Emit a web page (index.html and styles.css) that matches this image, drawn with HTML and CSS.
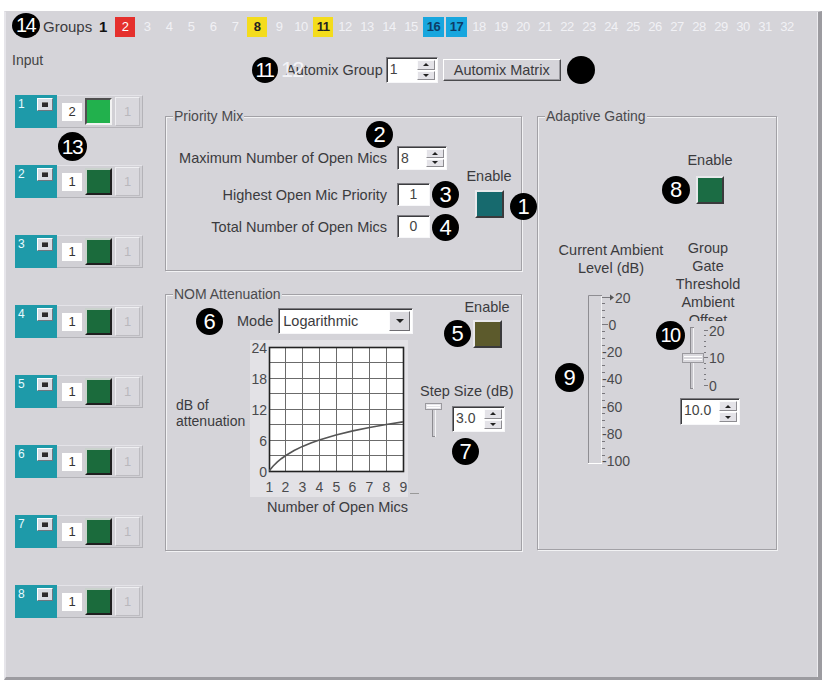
FILE: index.html
```html
<!DOCTYPE html>
<html>
<head>
<meta charset="utf-8">
<title>Automix</title>
<link rel="stylesheet" href="styles.css">
</head>
<body>
<div class="window">
  <div class="topbar">
    <span class="badge badge-2d badge-14">14</span>
    <span class="groups-label">Groups</span>
    <div class="group-nums">
      <span class="gn gn-cur">1</span><span class="gn gn-red">2</span><span class="gn">3</span><span class="gn">4</span><span class="gn">5</span><span class="gn">6</span><span class="gn">7</span><span class="gn gn-yel">8</span><span class="gn">9</span><span class="gn">10</span><span class="gn gn-yel">11</span><span class="gn">12</span><span class="gn">13</span><span class="gn">14</span><span class="gn">15</span><span class="gn gn-blu">16</span><span class="gn gn-blu">17</span><span class="gn">18</span><span class="gn">19</span><span class="gn">20</span><span class="gn">21</span><span class="gn">22</span><span class="gn">23</span><span class="gn">24</span><span class="gn">25</span><span class="gn">26</span><span class="gn">27</span><span class="gn">28</span><span class="gn">29</span><span class="gn">30</span><span class="gn">31</span><span class="gn">32</span>
    </div>
  </div>

  <div class="main">
    <div class="left-col">
      <div class="input-label">Input</div>
      <div class="strips">
        <div class="strip"><div class="strip-ch"><span class="ch-num">1</span><span class="ch-btn"><span></span></span></div><span class="strip-val">2</span><span class="strip-led led-on"></span><span class="strip-dis">1</span></div>
        <div class="strip"><div class="strip-ch"><span class="ch-num">2</span><span class="ch-btn"><span></span></span></div><span class="strip-val">1</span><span class="strip-led"></span><span class="strip-dis">1</span></div>
        <div class="strip"><div class="strip-ch"><span class="ch-num">3</span><span class="ch-btn"><span></span></span></div><span class="strip-val">1</span><span class="strip-led"></span><span class="strip-dis">1</span></div>
        <div class="strip"><div class="strip-ch"><span class="ch-num">4</span><span class="ch-btn"><span></span></span></div><span class="strip-val">1</span><span class="strip-led"></span><span class="strip-dis">1</span></div>
        <div class="strip"><div class="strip-ch"><span class="ch-num">5</span><span class="ch-btn"><span></span></span></div><span class="strip-val">1</span><span class="strip-led"></span><span class="strip-dis">1</span></div>
        <div class="strip"><div class="strip-ch"><span class="ch-num">6</span><span class="ch-btn"><span></span></span></div><span class="strip-val">1</span><span class="strip-led"></span><span class="strip-dis">1</span></div>
        <div class="strip"><div class="strip-ch"><span class="ch-num">7</span><span class="ch-btn"><span></span></span></div><span class="strip-val">1</span><span class="strip-led"></span><span class="strip-dis">1</span></div>
        <div class="strip"><div class="strip-ch"><span class="ch-num">8</span><span class="ch-btn"><span></span></span></div><span class="strip-val">1</span><span class="strip-led"></span><span class="strip-dis">1</span></div>
      </div>
      <span class="badge badge-2d badge-over b-13">13</span>
    </div>

    <div class="right-col">
      <div class="automix-row">
        <span class="badge badge-2d badge-11">11</span>
        <span class="ghost-12">12</span>
        <span class="am-label">Automix Group</span>
        <div class="spin spin-am"><span class="spin-val">1</span><span class="spin-btns"><span class="sb"><i class="tri-up"></i></span><span class="sb"><i class="tri-down"></i></span></span></div>
        <button class="btn">Automix Matrix</button>
        <span class="badge badge-dot"></span>
      </div>

      <div class="panels">
        <div class="col1">
          <div class="groupbox pm">
            <div class="gb-title">Priority Mix</div>
            <div class="pm-body">
              <div class="pm-fields">
                <div class="pm-row r1"><span class="pm-label">Maximum Number of Open Mics</span><div class="spin spin-pm"><span class="spin-val">8</span><span class="spin-btns"><span class="sb"><i class="tri-up"></i></span><span class="sb"><i class="tri-down"></i></span></span></div></div>
                <div class="pm-row r2"><span class="pm-label">Highest Open Mic Priority</span><div class="field">1</div></div>
                <div class="pm-row r3"><span class="pm-label">Total Number of Open Mics</span><div class="field">0</div></div>
              </div>
              <div class="enable-col pm-enable">
                <div class="enable-text">Enable</div>
                <div class="toggle tg-teal"></div>
              </div>
            </div>
            <span class="badge badge-over b-pm2">2</span>
            <span class="badge badge-over b-pm3">3</span>
            <span class="badge badge-over b-pm4">4</span>
            <span class="badge badge-over b-pm1">1</span>
          </div>

          <div class="groupbox nom">
            <div class="gb-title">NOM Attenuation</div>
            <div class="nom-body">
              <div class="nom-left">
                <div class="mode-row">
                  <span class="mode-label">Mode</span>
                  <div class="select"><span class="select-text">Logarithmic</span><span class="select-btn"><i class="tri-down big"></i></span></div>
                </div>
                <div class="chart-row">
                  <div class="db-label">dB of<br>attenuation</div>
                  <div class="chart-col">
                    <svg class="chart" width="170" height="157" viewBox="0 0 170 157">
                      <rect x="0" y="0" width="158" height="157" fill="#e3e2e6"/>
                      <rect x="19.5" y="7.5" width="134" height="124" fill="#ffffff"/>
                      <g stroke="#6b6b6b" stroke-width="1">
                        <line x1="35.5" y1="7.5" x2="35.5" y2="131.5"/>
                        <line x1="52.5" y1="7.5" x2="52.5" y2="131.5"/>
                        <line x1="69.5" y1="7.5" x2="69.5" y2="131.5"/>
                        <line x1="86.5" y1="7.5" x2="86.5" y2="131.5"/>
                        <line x1="102.5" y1="7.5" x2="102.5" y2="131.5"/>
                        <line x1="119.5" y1="7.5" x2="119.5" y2="131.5"/>
                        <line x1="136.5" y1="7.5" x2="136.5" y2="131.5"/>
                        <line x1="19.5" y1="22.5" x2="153.5" y2="22.5"/>
                        <line x1="19.5" y1="38.5" x2="153.5" y2="38.5"/>
                        <line x1="19.5" y1="53.5" x2="153.5" y2="53.5"/>
                        <line x1="19.5" y1="69.5" x2="153.5" y2="69.5"/>
                        <line x1="19.5" y1="84.5" x2="153.5" y2="84.5"/>
                        <line x1="19.5" y1="100.5" x2="153.5" y2="100.5"/>
                        <line x1="19.5" y1="115.5" x2="153.5" y2="115.5"/>
                      </g>
                      <rect x="19.5" y="7.5" width="134" height="124" fill="none" stroke="#222" stroke-width="1.6"/>
                      <polyline fill="none" stroke="#555" stroke-width="1.6" points="19.5,131 20.7,128.9 23.2,126 27.4,121.9 31.6,118.5 35.8,115.5 44.1,110.5 52.5,106.4 60.9,103 69.3,100 77.6,97.4 86,95 102.8,90.9 119.5,87.5 136.3,84.5 153,81.9"/>
                      <line x1="160" y1="153.5" x2="169" y2="153.5" stroke="#999" stroke-width="1"/>
                      <g class="axis-text" text-anchor="end">
                        <text x="17" y="13">24</text>
                        <text x="17" y="44">18</text>
                        <text x="17" y="75">12</text>
                        <text x="17" y="106">6</text>
                        <text x="17" y="137">0</text>
                      </g>
                      <g class="axis-text" text-anchor="middle">
                        <text x="19.5" y="152">1</text>
                        <text x="35.5" y="152">2</text>
                        <text x="52.5" y="152">3</text>
                        <text x="69.5" y="152">4</text>
                        <text x="86.5" y="152">5</text>
                        <text x="102.5" y="152">6</text>
                        <text x="119.5" y="152">7</text>
                        <text x="136.5" y="152">8</text>
                        <text x="153.5" y="152">9</text>
                      </g>
                    </svg>
                    <div class="x-label">Number of Open Mics</div>
                  </div>
                </div>
              </div>
              <div class="nom-right">
                <div class="enable-col nom-enable">
                  <div class="enable-text">Enable</div>
                  <div class="toggle tg-olive"></div>
                </div>
                <div class="step-label">Step Size (dB)</div>
                <div class="step-row">
                  <svg class="step-slider" width="18" height="36" viewBox="0 0 18 36">
                    <rect x="7.5" y="7.5" width="3" height="27" fill="#cfced3" stroke="#8c8b90" stroke-width="1"/>
                    <line x1="10.5" y1="8" x2="10.5" y2="35" stroke="#f4f4f6"/>
                    <rect x="0.5" y="1.5" width="16" height="6" fill="#e6e5ea" stroke="#9a999e"/>
                    <line x1="2" y1="3.5" x2="15" y2="3.5" stroke="#ffffff"/>
                    <line x1="2" y1="5.5" x2="15" y2="5.5" stroke="#ffffff"/>
                  </svg>
                  <div class="spin spin-step"><span class="spin-val">3.0</span><span class="spin-btns"><span class="sb"><i class="tri-up"></i></span><span class="sb"><i class="tri-down"></i></span></span></div>
                </div>
              </div>
            </div>
            <span class="badge badge-over b-nom6">6</span>
            <span class="badge badge-over b-nom5">5</span>
            <span class="badge badge-over b-nom7">7</span>
          </div>
        </div>

        <div class="groupbox ag">
          <div class="gb-title">Adaptive Gating</div>
          <div class="enable-col ag-enable">
            <div class="enable-text">Enable</div>
            <div class="toggle tg-green"></div>
          </div>
          <div class="ag-cols">
            <div class="ag-col-a">
              <div class="ag-text">Current Ambient<br>Level (dB)</div>
              <svg class="meter" width="66" height="180" viewBox="0 0 66 180">
                <path d="M8.5 173V5.5H22" fill="none" stroke="#8e8d92" stroke-width="1"/>
                <line x1="8" y1="173.5" x2="22" y2="173.5" stroke="#ffffff"/>
                <line x1="21.5" y1="6" x2="21.5" y2="173" stroke="#f0f0f2"/>
                <g stroke="#7a797e" stroke-width="1">
                  <line x1="22" y1="13.5" x2="25" y2="13.5"/><line x1="22" y1="20.5" x2="25" y2="20.5"/><line x1="22" y1="27.5" x2="25" y2="27.5"/>
                  <line x1="22" y1="41.5" x2="25" y2="41.5"/><line x1="22" y1="48.5" x2="25" y2="48.5"/><line x1="22" y1="55.5" x2="25" y2="55.5"/>
                  <line x1="22" y1="68.5" x2="25" y2="68.5"/><line x1="22" y1="75.5" x2="25" y2="75.5"/><line x1="22" y1="82.5" x2="25" y2="82.5"/>
                  <line x1="22" y1="96.5" x2="25" y2="96.5"/><line x1="22" y1="103.5" x2="25" y2="103.5"/><line x1="22" y1="110.5" x2="25" y2="110.5"/>
                  <line x1="22" y1="123.5" x2="25" y2="123.5"/><line x1="22" y1="130.5" x2="25" y2="130.5"/><line x1="22" y1="137.5" x2="25" y2="137.5"/>
                  <line x1="22" y1="151.5" x2="25" y2="151.5"/><line x1="22" y1="158.5" x2="25" y2="158.5"/><line x1="22" y1="165.5" x2="25" y2="165.5"/>
                  <line x1="22" y1="7.5" x2="30" y2="7.5"/>
                  <line x1="22" y1="34.5" x2="28" y2="34.5"/>
                </g>
                <polygon points="30,4.5 34,7.5 30,10.5" fill="#555"/>
                <g class="axis-text">
                  <text x="35" y="13">20</text>
                  <text x="28.5" y="40">0</text>
                  <text x="22" y="67">-20</text>
                  <text x="22" y="94">-40</text>
                  <text x="22" y="122">-60</text>
                  <text x="22" y="149">-80</text>
                  <text x="22" y="176">-100</text>
                </g>
              </svg>
            </div>
            <div class="ag-col-b">
              <div class="ag-text">Group<br>Gate<br>Threshold<br>Ambient<br>Offset</div>
              <svg class="ag-slider" width="50" height="72" viewBox="0 0 50 72">
                <rect x="10.5" y="6.5" width="3" height="61" fill="#c9c8cd" stroke="#8c8b90"/>
                <line x1="13.5" y1="7" x2="13.5" y2="68" stroke="#f4f4f6"/>
                <rect x="2.5" y="32.5" width="21" height="9" fill="#d9d8dd" stroke="#9a999e"/>
                <line x1="4" y1="35.5" x2="22" y2="35.5" stroke="#ffffff"/>
                <line x1="4" y1="38.5" x2="22" y2="38.5" stroke="#ffffff"/>
                <g stroke="#7a797e">
                  <line x1="24" y1="9.5" x2="28" y2="9.5"/>
                  <line x1="24" y1="14.5" x2="26" y2="14.5"/><line x1="24" y1="20.5" x2="26" y2="20.5"/><line x1="24" y1="25.5" x2="26" y2="25.5"/><line x1="24" y1="31.5" x2="26" y2="31.5"/>
                  <line x1="24" y1="36.5" x2="28" y2="36.5"/>
                  <line x1="24" y1="42.5" x2="26" y2="42.5"/><line x1="24" y1="47.5" x2="26" y2="47.5"/><line x1="24" y1="53.5" x2="26" y2="53.5"/><line x1="24" y1="58.5" x2="26" y2="58.5"/>
                  <line x1="24" y1="64.5" x2="28" y2="64.5"/>
                </g>
                <g class="axis-text">
                  <text x="29" y="14.5">20</text>
                  <text x="29" y="41.5">10</text>
                  <text x="29" y="69.5">0</text>
                </g>
              </svg>
              <div class="spin spin-ag"><span class="spin-val">10.0</span><span class="spin-btns"><span class="sb"><i class="tri-up"></i></span><span class="sb"><i class="tri-down"></i></span></span></div>
            </div>
          </div>
          <span class="badge badge-over b-ag8">8</span>
          <span class="badge badge-over b-ag9">9</span>
          <span class="badge badge-2d badge-over b-ag10">10</span>
        </div>
      </div>
    </div>
  </div>
</div>
</body>
</html>
```

FILE: styles.css
```css
* { box-sizing: border-box; }
html, body { margin: 0; padding: 0; }
body {
  background: #ffffff;
  width: 826px;
  height: 684px;
  overflow: hidden;
  font-family: "Liberation Sans", Arial, sans-serif;
  font-size: 14.5px;
  color: #3b3b3e;
}

.window {
  margin: 11px 0 0 4px;
  width: 818px;
  height: 669px;
  background: #d5d4d9;
  border-left: 2px solid #e6e5ea;
  border-top: 1px solid #d5d4d9;
  border-right: 4px solid #9c9ba0;
  border-bottom: 3px solid #9c9ba0;
  box-shadow: inset -1px 0 0 #ecebef;
  display: flex;
  flex-direction: column;
}

/* ---------- badges ---------- */
.badge {
  width: 27px;
  height: 27px;
  border-radius: 50%;
  background: #000;
  color: #fff;
  font-family: "Liberation Sans", Arial, sans-serif;
  font-size: 22px;
  line-height: 27px;
  text-align: center;
  display: inline-block;
  flex: none;
}
.badge-2d { font-size: 20px; letter-spacing: -1.5px; text-indent: -1px; }
.badge-over { position: absolute; z-index: 2; }

/* ---------- top bar ---------- */
.topbar {
  display: flex;
  align-items: flex-end;
  height: 26px;
  padding-left: 6px;
}
.badge-14 { width: 28px; height: 25px; line-height: 25px; align-self: flex-start; margin-top: 1px; }
.groups-label {
  width: 50px;
  margin-left: 3px;
  line-height: 20px;
  margin-bottom: 1px;
  font-size: 15px;
  color: #3b3b3e;
}
.group-nums { display: flex; gap: 2px; margin-bottom: 1px; }
.gn {
  width: 20px;
  height: 20px;
  line-height: 20px;
  text-align: center;
  font-size: 13px;
  color: #f1f1f5;
  letter-spacing: -0.5px;
}
.gn-cur { color: #111; font-weight: bold; font-size: 15px; }
.gn-red { background: #e5302d; color: #fff; }
.gn-yel { background: #f4dc1c; color: #222; font-weight: bold; }
.gn-blu { background: #17a6de; color: #0e3d66; font-weight: bold; width: 21px; }

/* ---------- main ---------- */
.main { display: flex; flex: 1; }
.left-col { width: 153px; position: relative; flex: none; }
.right-col { flex: 1; }

.input-label { margin: 15px 0 0 6px; line-height: 14px; font-size: 14px; color: #444; }
.strips { display: flex; flex-direction: column; gap: 37px; margin: 28px 0 0 9px; }

.strip {
  display: flex;
  align-items: center;
  width: 128px;
  height: 33px;
  background: #d1d0d5;
  border: 1px solid;
  border-color: #e4e3e8 #b4b3b8 #b4b3b8 #e4e3e8;
}
.strip-ch {
  align-self: stretch;
  width: 42px;
  margin: -1px 0 -1px -1px;
  background: #1e9aa9;
  display: flex;
  align-items: flex-start;
  padding: 3px 0 0 3px;
}
.ch-num { color: #e8fbff; font-size: 12px; line-height: 12px; }
.ch-btn {
  margin-left: auto;
  margin-right: 4px;
  width: 16px;
  height: 13px;
  background: #d7dce4;
  border: 1px solid;
  border-color: #ffffff #6d7880 #6d7880 #ffffff;
  display: flex;
  align-items: center;
  justify-content: center;
}
.ch-btn span { width: 6px; height: 5px; background: #2b2b2e; border-top: 1px solid #777; }
.strip-val {
  width: 20px;
  height: 18px;
  margin-left: 5px;
  background: #fff;
  font-size: 13px;
  line-height: 18px;
  text-align: center;
  color: #333;
}
.strip-led {
  width: 27px;
  height: 27px;
  margin-left: 3px;
  background: #1b6b3c;
  border: 2px solid;
  border-color: #c9d2cc #1f1f1f #1f1f1f #c9d2cc;
}
.strip-led.led-on {
  background: #22b14d;
  border-color: #4f4f4f #f2f2f2 #f2f2f2 #4f4f4f;
}
.strip-dis {
  width: 25px;
  height: 29px;
  margin-left: 3px;
  background: #d9d8dd;
  border: 1px solid;
  border-color: #eeeef1 #bdbcc1 #bdbcc1 #eeeef1;
  color: #b9b8bd;
  font-size: 13px;
  line-height: 27px;
  text-align: center;
}
.b-13 { left: 52px; top: 94px; width: 29px; height: 29px; line-height: 29px; font-size: 21px; }

/* ---------- automix row ---------- */
.automix-row {
  position: relative;
  display: flex;
  align-items: center;
  height: 26px;
  margin: 19px 0 0 93px;
}
.badge-11 { width: 26px; height: 26px; line-height: 26px; }
.ghost-12 {
  position: absolute;
  left: 29px;
  top: 0;
  font-size: 22px;
  line-height: 25px;
  color: rgba(248, 248, 252, 0.9);
  letter-spacing: -1px;
}
.am-label { margin-left: 8px; }
.spin-am { margin-left: 3px; width: 52px; height: 26px; }
.btn {
  margin-left: 5px;
  width: 118px;
  height: 22px;
  padding: 0;
  font: inherit;
  font-size: 14.5px;
  color: #3b3b3e;
  background: #d5d4d9;
  border: 1px solid;
  border-color: #ffffff #4a4a4d #4a4a4d #ffffff;
  box-shadow: inset -1px -1px 0 #9a999e;
}
.badge-dot { width: 28px; height: 28px; margin-left: 6px; }

/* ---------- spin / fields ---------- */
.spin {
  display: flex;
  background: #fff;
  border: 1px solid;
  border-color: #7e7d82 #f7f7f9 #f7f7f9 #7e7d82;
  box-shadow: inset 1px 1px 0 #3c3c3f;
}
.spin-val { flex: 1; padding: 2px 0 0 3px; font-size: 14px; line-height: 18px; color: #444; }
.spin-btns { display: flex; flex-direction: column; width: 18px; margin: 2px 2px 2px 0; gap: 1px; }
.sb {
  flex: 1;
  background: #e4e3e8;
  border: 1px solid;
  border-color: #fbfbfc #8d8c91 #8d8c91 #fbfbfc;
  display: flex;
  align-items: center;
  justify-content: center;
}
.tri-up { width: 0; height: 0; border-left: 3px solid transparent; border-right: 3px solid transparent; border-bottom: 3px solid #222; }
.tri-down { width: 0; height: 0; border-left: 3px solid transparent; border-right: 3px solid transparent; border-top: 3px solid #222; }
.tri-down.big { border-left-width: 4px; border-right-width: 4px; border-top-width: 4px; }

.field {
  width: 33px;
  height: 23px;
  background: #fff;
  border: 1px solid;
  border-color: #7e7d82 #f7f7f9 #f7f7f9 #7e7d82;
  box-shadow: inset 1px 1px 0 #3c3c3f;
  text-align: center;
  font-size: 14px;
  line-height: 21px;
  color: #444;
}

/* ---------- group boxes ---------- */
.panels {
  display: grid;
  grid-template-columns: 357px 240px;
  column-gap: 15px;
  align-items: start;
  margin: 33px 0 0 6px;
}
.groupbox {
  position: relative;
  border: 1px solid #a2a1a6;
  box-shadow: inset 1px 1px 0 #f2f2f4, 1px 1px 0 #f2f2f4;
}
.gb-title {
  display: table;
  margin: -8px 0 0 7px;
  padding: 0 1px;
  background: #d5d4d9;
  line-height: 14px;
  font-size: 14px;
  color: #4a4a4d;
}
.enable-col { display: flex; flex-direction: column; align-items: center; }
.enable-text { line-height: 14px; }
.toggle {
  width: 29px;
  height: 28px;
  border: 2px solid;
  border-color: #e9e9ec #3a3a3c #3a3a3c #e9e9ec;
}
.tg-teal { background: #176a6e; }
.tg-olive { background: #5c5a2c; }
.tg-green { background: #1b6c44; width: 28px; }

/* priority mix */
.pm { height: 155px; }
.pm-body { display: flex; margin-top: 23px; }
.pm-fields { display: flex; flex-direction: column; width: 281px; }
.pm-row { display: flex; align-items: center; }
.pm-row.r1 { height: 24px; }
.pm-row.r2 { margin-top: 13px; }
.pm-row.r3 { margin-top: 9px; }
.pm-label { width: 231px; padding-right: 10px; text-align: right; white-space: nowrap; }
.spin-pm { width: 50px; height: 24px; }
.pm-enable { width: 46px; margin: 23px 0 0 19px; }
.pm-enable .toggle { margin-top: 7px; }
.b-pm2 { left: 200px; top: 4px; }
.b-pm3 { left: 266px; top: 64px; }
.b-pm4 { left: 266px; top: 97px; }
.b-pm1 { left: 344px; top: 76px; }

/* NOM attenuation */
.nom { height: 257px; margin-top: 23px; }
.nom-body { display: flex; margin-top: -1px; }
.nom-left { width: 254px; }
.mode-row { display: flex; align-items: center; height: 26px; margin-top: 8px; padding-left: 71px; }
.mode-label { margin-right: 5px; }
.select {
  display: flex;
  align-items: center;
  width: 135px;
  height: 26px;
  background: #fff;
  border: 1px solid;
  border-color: #7e7d82 #f7f7f9 #f7f7f9 #7e7d82;
  box-shadow: inset 1px 1px 0 #3c3c3f;
}
.select-text { flex: 1; padding-left: 4px; font-size: 14.5px; color: #3b3b3e; }
.select-btn {
  width: 21px;
  height: 20px;
  margin-right: 2px;
  background: #d9d8dd;
  border: 1px solid;
  border-color: #fbfbfc #6e6d72 #6e6d72 #fbfbfc;
  display: flex;
  align-items: center;
  justify-content: center;
}
.chart-row { display: flex; margin-top: 6px; }
.db-label { width: 94px; padding-left: 10px; margin-top: 57px; line-height: 16px; font-size: 14px; }
.chart-col { display: flex; flex-direction: column; }
.chart { display: block; }
.axis-text { font-family: "Liberation Sans", Arial, sans-serif; font-size: 14px; fill: #4a4a4d; }
.x-label { padding-left: 17px; margin-top: 3px; line-height: 14px; }
.nom-right { width: 96px; display: flex; flex-direction: column; }
.nom-enable { width: 54px; margin-left: 40px; }
.nom-enable .toggle { margin-top: 6px; }
.step-label { margin-top: 36px; line-height: 14px; white-space: nowrap; }
.step-row { display: flex; align-items: flex-start; margin-top: 4px; }
.step-slider { display: block; margin-left: 5px; }
.spin-step { width: 53px; height: 26px; margin: 4px 0 0 9px; }
.b-nom6 { left: 30px; top: 13px; }
.b-nom5 { left: 278px; top: 25px; }
.b-nom7 { left: 286px; top: 143px; }

/* adaptive gating */
.ag { height: 434px; }
.ag-enable { width: 60px; margin: 30px 0 0 142px; }
.ag-enable .toggle { margin-top: 9px; }
.ag-cols { display: flex; margin-top: 35px; }
.ag-col-a { width: 110px; margin-left: 18px; display: flex; flex-direction: column; }
.ag-col-b { width: 80px; margin-left: 2px; display: flex; flex-direction: column; }
.ag-text { text-align: center; line-height: 18px; }
.ag-col-a .ag-text { margin-top: 2px; }
.meter { display: block; margin: 13px 0 0 24px; }
.ag-slider { display: block; position: relative; margin: -8px 0 0 12px; background: #d5d4d9; }
.spin-ag { width: 60px; height: 27px; margin: 5px 0 0 12px; }
.b-ag8 { left: 124px; top: 59px; width: 28px; height: 28px; line-height: 28px; }
.b-ag9 { left: 17px; top: 246px; width: 29px; height: 29px; line-height: 29px; }
.b-ag10 { left: 118px; top: 204px; width: 29px; height: 29px; line-height: 29px; }
```
